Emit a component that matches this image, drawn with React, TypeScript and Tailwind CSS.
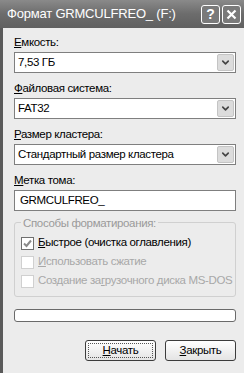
import { ChevronDown } from "lucide-react";

const font = { fontFamily: "'Liberation Sans', Arial, sans-serif" };
const txt = "text-[11.5px] tracking-[-0.35px]";

function Select({ value }: { value: string }) {
  return (
    <div className="h-[21px] border border-[#7f7f7f] bg-white flex items-center">
      <span className={`flex-1 pl-[3px] ${txt} text-black truncate`}>{value}</span>
      <div className="w-[17px] h-[17px] mr-[1px] bg-[#dcdcdc] border border-[#c4c4c4] rounded-[2px] flex items-center justify-center">
        <ChevronDown size={11} strokeWidth={3.5} className="text-[#444]" />
      </div>
    </div>
  );
}

function Label({ k, rest }: { k: string; rest: string }) {
  return (
    <div className={`${txt} text-black leading-[14px] mb-[3px]`}>
      <span className="underline underline-offset-1">{k}</span>
      {rest}
    </div>
  );
}

function Check({ checked, disabled, children }: { checked?: boolean; disabled?: boolean; children: React.ReactNode }) {
  return (
    <div className={`h-[14px] flex items-center gap-[4px] ${txt} whitespace-nowrap ${disabled ? "text-[#a8a8a8]" : "text-black"}`}>
      <div className={`w-[13px] h-[13px] shrink-0 border bg-white flex items-center justify-center ${disabled ? "border-[#d0d0d0]" : "border-[#6f6f6f]"}`}>
        {checked && (
          <svg width="9" height="9" viewBox="0 0 9 9">
            <path d="M1 4.5 L3.5 7 L8 1.5" fill="none" stroke="#8a8a8a" strokeWidth="2" />
          </svg>
        )}
      </div>
      <span>{children}</span>
    </div>
  );
}

export default function App() {
  return (
    <div className="w-[244px] h-[373px] flex flex-col bg-[#ececec] overflow-hidden" style={font}>
      <div className="h-[28px] shrink-0 bg-gradient-to-b from-[#8a8a8a] via-[#6c6c6c] to-[#606060] flex items-center pl-[7px] pr-[3px]">
        <span className="flex-1 text-white text-[13px] tracking-[-0.2px]">Формат GRMCULFREO_ (F:)</span>
        <div className="flex gap-[2px]">
          <div className="w-[19px] h-[19px] border border-white rounded-[3px] bg-[#7a7a7a] flex items-center justify-center text-white text-[14px] font-bold">?</div>
          <div className="w-[19px] h-[19px] border border-white rounded-[3px] bg-[#7a7a7a] flex items-center justify-center">
            <svg width="11" height="11" viewBox="0 0 11 11">
              <path d="M1.5 1.5 L9.5 9.5 M9.5 1.5 L1.5 9.5" stroke="#fff" strokeWidth="2.2" />
            </svg>
          </div>
        </div>
      </div>
      <div className="flex-1 border-l-[3px] border-[#5a5a5a] pl-[11px] pr-[8px] pt-[7px] flex flex-col">
        <Label k="Е" rest="мкость:" />
        <Select value="7,53 ГБ" />
        <div className="h-[8px]" />
        <Label k="Ф" rest="айловая система:" />
        <Select value="FAT32" />
        <div className="h-[8px]" />
        <Label k="Р" rest="азмер кластера:" />
        <Select value="Стандартный размер кластера" />
        <div className="h-[8px]" />
        <Label k="М" rest="етка тома:" />
        <div className={`h-[21px] border border-[#7f7f7f] bg-white flex items-center pl-[5px] ${txt} text-black`}>GRMCULFREO_</div>
        <div className="relative mt-[11px] border border-[#d0d0d0] rounded-[3px] pt-[13px] pb-[8px] px-[6px] flex flex-col gap-[5px]">
          <div className={`absolute -top-[8px] left-[6px] px-[2px] bg-[#ececec] ${txt} text-[#9a9a9a]`}>Способы форматироания:</div>
          <Check checked>
            <span className="underline underline-offset-1">Б</span>ыстрое (очистка оглавления)
          </Check>
          <Check disabled>
            <span className="underline underline-offset-1">И</span>спользовать сжатие
          </Check>
          <Check disabled>
            Создание за<span className="underline underline-offset-1">г</span>рузочного диска MS-DOS
          </Check>
        </div>
        <div className="mt-[12px] h-[13px] border border-[#6a6a6a] rounded-[3px] bg-white" />
        <div className="mt-[18px] flex justify-end gap-[9px]">
          <div className="w-[71px] h-[21px] border border-[#3c3c3c] rounded-[3px] bg-gradient-to-b from-white to-[#e4e4e4] flex items-center justify-center p-[2px]">
            <div className={`w-full h-full border border-dotted border-[#555] flex items-center justify-center ${txt} text-black`}>
              <span><span className="underline underline-offset-1">Н</span>ачать</span>
            </div>
          </div>
          <div className={`w-[71px] h-[21px] border border-[#3c3c3c] rounded-[3px] bg-gradient-to-b from-white to-[#e4e4e4] flex items-center justify-center ${txt} text-black`}>
            <span><span className="underline underline-offset-1">З</span>акрыть</span>
          </div>
        </div>
      </div>
    </div>
  );
}
